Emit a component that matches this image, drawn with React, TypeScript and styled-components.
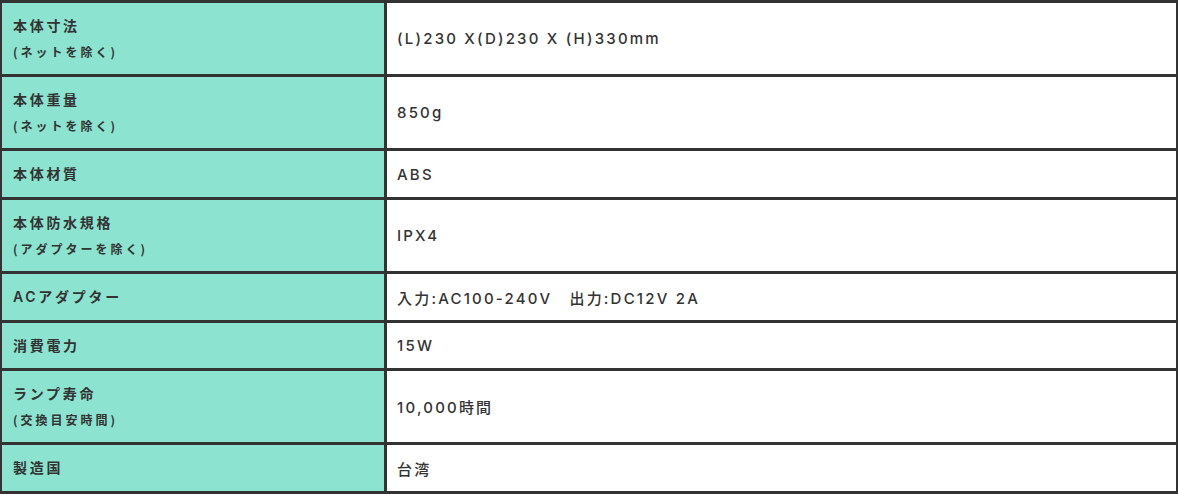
import * as React from 'react';
import styled, {createGlobalStyle} from 'styled-components';

interface Spec {
    label: string;
    note?: string;
    value: string;
    height: number;
}

const SPECS: Spec[] = [
    {label: '本体寸法', note: '(ネットを除く)', value: '(L)230 X(D)230 X (H)330mm', height: 71},
    {label: '本体重量', note: '(ネットを除く)', value: '850g', height: 71},
    {label: '本体材質', value: 'ABS', height: 46},
    {label: '本体防水規格', note: '(アダプターを除く)', value: 'IPX4', height: 71},
    {label: 'ACアダプター', value: '入力:AC100-240V\u3000出力:DC12V 2A', height: 46},
    {label: '消費電力', value: '15W', height: 45},
    {label: 'ランプ寿命', note: '(交換目安時間)', value: '10,000時間', height: 71},
    {label: '製造国', value: '台湾', height: 46},
];

const GlobalStyle = createGlobalStyle`
    html, body {
        margin: 0;
        padding: 0;
        background: #ffffff;
    }

    body {
        font-family: 'Inter', 'Noto Sans CJK JP', sans-serif;
        color: #333333;
    }
`;

const Table = styled.div`
    display: grid;
    grid-template-columns: 382px 1fr;
    gap: 3px;
    padding: 3px 2px;
    background: #333333;
    width: 1178px;
    box-sizing: border-box;
`;

const LabelCell = styled.div<{$h: number}>`
    display: flex;
    flex-direction: column;
    justify-content: center;
    height: ${(p) => p.$h}px;
    padding: 0 11px;
    background: #8be3d0;
    box-sizing: border-box;
`;

const Label = styled.div`
    font-family: 'Inter', 'Noto Sans CJK JP', sans-serif;
    font-size: 14px;
    font-weight: 600;
    line-height: 26px;
    letter-spacing: 2.7px;
`;

const Note = styled.div`
    font-family: 'Noto Sans CJK JP', sans-serif;
    font-size: 12px;
    font-weight: 700;
    line-height: 26px;
    letter-spacing: 3px;
`;

const ValueCell = styled.div<{$h: number}>`
    display: flex;
    align-items: center;
    height: ${(p) => p.$h}px;
    padding: 0 10px;
    background: #ffffff;
    box-sizing: border-box;
    font-family: 'Inter', 'Noto Sans CJK JP', sans-serif;
    font-size: 15px;
    font-weight: 500;
    letter-spacing: 2.2px;
    white-space: pre;
`;

const SpecTable: React.FC = () => {
    return (
        <Table>
            {SPECS.map((spec) => (
                <React.Fragment key={spec.label}>
                    <LabelCell $h={spec.height}>
                        <Label>{spec.label}</Label>
                        {spec.note && <Note>{spec.note}</Note>}
                    </LabelCell>
                    <ValueCell $h={spec.height}>{spec.value}</ValueCell>
                </React.Fragment>
            ))}
        </Table>
    );
};

const App: React.FC = () => (
    <>
        <GlobalStyle />
        <SpecTable />
    </>
);

export default App;
